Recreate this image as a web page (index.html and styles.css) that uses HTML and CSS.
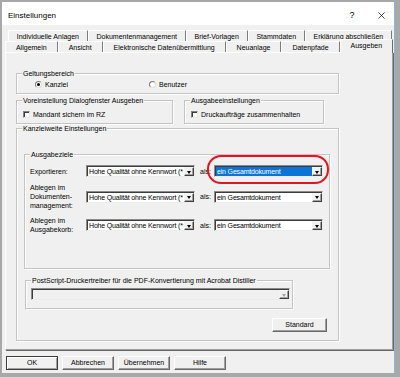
FILE: index.html
```html
<!DOCTYPE html>
<html>
  <head>
    <title>Einstellungen</title>
    <link rel="stylesheet" href="styles.css">
  </head>
  <body>
    <div class="window">
      <div class="titlebar">
        <span class="title">Einstellungen</span>
        <span class="help">?</span>
        <svg class="close" width="8" height="8" viewBox="0 0 8 8">
          <path d="M0.5 0.5 L7.5 7.5 M7.5 0.5 L0.5 7.5" stroke="#000" stroke-width="0.8" fill="none"/>
        </svg>
      </div>
      <div class="content">
        <div class="tab-row back">
          <div class="tab">Individuelle Anlagen</div>
          <div class="tab">Dokumentenmanagement</div>
          <div class="tab">Brief-Vorlagen</div>
          <div class="tab">Stammdaten</div>
          <div class="tab">Erklärung abschließen</div>
        </div>
        <div class="tab-row front">
          <div class="tab">Allgemein</div>
          <div class="tab">Ansicht</div>
          <div class="tab">Elektronische Datenübermittlung</div>
          <div class="tab">Neuanlage</div>
          <div class="tab">Datenpfade</div>
          <div class="tab active">Ausgeben</div>
        </div>
        <div class="panel">
          <fieldset class="group scope">
            <legend>Geltungsbereich</legend>
            <div class="group-body">
              <label class="option"><span class="radio checked"></span>Kanzlei</label>
              <label class="option"><span class="radio"></span>Benutzer</label>
            </div>
          </fieldset>
          <div class="pair">
            <fieldset class="group dialog">
              <legend>Voreinstellung Dialogfenster Ausgeben</legend>
              <div class="group-body">
                <label class="option"><span class="check"></span>Mandant sichern im RZ</label>
              </div>
            </fieldset>
            <fieldset class="group output">
              <legend>Ausgabeeinstellungen</legend>
              <div class="group-body">
                <label class="option"><span class="check"></span>Druckaufträge zusammenhalten</label>
              </div>
            </fieldset>
          </div>
          <fieldset class="group firm">
            <legend>Kanzleiweite Einstellungen</legend>
            <div class="group-body">
              <fieldset class="group targets">
                <legend>Ausgabeziele</legend>
                <div class="group-body target-grid">
                  <span class="field-label">Exportieren:</span>
                  <div class="combo"><span class="value">Hohe Qualität ohne Kennwort (*</span><span class="arrow"></span></div>
                  <span class="als">als:</span>
                  <div class="marked">
                    <div class="combo"><span class="value selected">ein Gesamtdokument</span><span class="arrow"></span></div>
                    <div class="mark"></div>
                  </div>

                  <span class="field-label">Ablegen im<br>Dokumenten-<br>management:</span>
                  <div class="combo"><span class="value">Hohe Qualität ohne Kennwort (*</span><span class="arrow"></span></div>
                  <span class="als">als:</span>
                  <div class="combo"><span class="value">ein Gesamtdokument</span><span class="arrow"></span></div>

                  <span class="field-label">Ablegen im<br>Ausgabekorb:</span>
                  <div class="combo"><span class="value">Hohe Qualität ohne Kennwort (*</span><span class="arrow"></span></div>
                  <span class="als">als:</span>
                  <div class="combo"><span class="value">ein Gesamtdokument</span><span class="arrow"></span></div>
                </div>
              </fieldset>
              <fieldset class="group driver">
                <legend>PostScript-Druckertreiber für die PDF-Konvertierung mit Acrobat Distiller</legend>
                <div class="group-body">
                  <div class="combo disabled"><span class="value"></span><span class="arrow"></span></div>
                </div>
              </fieldset>
              <div class="actions">
                <button class="btn wide">Standard</button>
              </div>
            </div>
          </fieldset>
        </div>
        <div class="footer">
          <button class="btn default">OK</button>
          <button class="btn">Abbrechen</button>
          <button class="btn">Übernehmen</button>
          <button class="btn">Hilfe</button>
        </div>
      </div>
    </div>
  </body>
</html>
```

FILE: styles.css
```css
* {
  margin: 0;
  padding: 0;
  box-sizing: border-box;
}

body {
  width: 400px;
  height: 377px;
  overflow: hidden;
  padding: 2px 0 0 2px;
  background: #a8a8a8;
  font-family: 'Liberation Sans', Arial, sans-serif;
  font-size: 7px;
  line-height: 9px;
  color: #000;
}

.window {
  width: 393px;
  height: 371px;
  background: #f0f0f0;
  border-right: 1px solid #8fb3da;
  display: flex;
  flex-direction: column;
}

.titlebar {
  height: 23px;
  background: #fff;
  display: flex;
  align-items: center;
  padding: 3px 9px 0 6px;
  font-size: 8px;
}

.title {
  flex: 1;
}

.help {
  width: 10px;
  text-align: center;
  font-size: 9px;
  margin-right: 21px;
}

.close {
  display: block;
  width: 7px;
  height: 7px;
}

.content {
  flex: 1;
  display: flex;
  flex-direction: column;
  padding: 5px 1px 0 3px;
}

/* tabs */
.tab-row {
  display: flex;
  height: 11px;
}

.tab-row.back {
  margin: 0 1px 0 3px;
}

.tab {
  flex: 1 1 auto;
  height: 11px;
  padding: 1px 3px 0;
  text-align: center;
  white-space: nowrap;
  border: 1px solid #fff;
  border-bottom: none;
  border-right-color: #7c7c7c;
}

.tab.active {
  position: relative;
  z-index: 1;
  height: 14px;
  margin-top: -2px;
  padding-top: 1px;
  background: #f0f0f0;
  border-right-color: #696969;
}

.panel {
  height: 298px;
  border-top: 1px solid #fff;
  border-left: 1px solid #fff;
  border-right: 1px solid #a0a0a0;
  border-bottom: 1px solid #a0a0a0;
  box-shadow: 1px 1px 0 #696969;
  padding: 16px 0 0 10px;
}

/* group boxes */
.group {
  border: 1px solid #c4c4c4;
  box-shadow: inset 1px 1px 0 #fff, 1px 1px 0 #fff;
  min-width: 0;
}

.group legend {
  margin-left: 5px;
  padding: 0 1px;
  line-height: 9px;
  background: #f0f0f0;
  white-space: nowrap;
}

.option {
  display: flex;
  align-items: center;
  gap: 3px;
  height: 9px;
}

.radio {
  width: 7px;
  height: 7px;
  border-radius: 50%;
  background: #fff;
  border: 1px solid;
  border-color: #7a7a7a #dcdcdc #dcdcdc #7a7a7a;
  display: flex;
  align-items: center;
  justify-content: center;
}

.radio.checked::after {
  content: '';
  width: 3px;
  height: 3px;
  border-radius: 50%;
  background: #000;
}

.check {
  width: 7px;
  height: 7px;
  background: #fff;
  border: 1px solid;
  border-color: #808080 #e6e6e6 #e6e6e6 #808080;
  box-shadow: inset 1px 1px 0 #404040;
}

.scope {
  width: 323px;
}

.scope .group-body {
  display: flex;
  padding: 2px 0 4px 18px;
}

.scope .option:first-child {
  width: 114px;
}

.pair {
  display: flex;
  margin-top: 2px;
}

.dialog {
  width: 157px;
}

.output {
  width: 140px;
  margin-left: 11px;
}

.dialog .group-body,
.output .group-body {
  padding: 5px 0 4px 6px;
}

.firm {
  width: 323px;
}

.firm > .group-body {
  padding: 17px 8px 8px 7px;
}

.targets {
  width: 306px;
}

.target-grid {
  display: grid;
  grid-template-columns: 56px 109px 19px 109px;
  row-gap: 6px;
  align-items: center;
  padding: 6px 6px 34px 5px;
}

.als {
  padding-left: 5px;
}

/* combo boxes */
.combo {
  height: 12px;
  display: flex;
  background: #fff;
  border: 1px solid;
  border-color: #8a8a8a #ececec #ececec #8a8a8a;
  box-shadow: inset 1px 1px 0 #3c3c3c;
  padding: 1px 0 0 1px;
}

.combo .value {
  flex: 1;
  overflow: hidden;
  white-space: nowrap;
  line-height: 9px;
  padding-left: 1px;
  letter-spacing: -0.17px;
}

.combo .value.selected {
  background: #0b74d8;
  color: #fff;
}

.combo .arrow {
  width: 10px;
  height: 9px;
  background: #f0f0f0;
  border: 1px solid;
  border-color: #f4f4f4 #404040 #404040 #f4f4f4;
  box-shadow: inset -1px -1px 0 #a0a0a0;
  display: flex;
  align-items: center;
  justify-content: center;
}

.combo .arrow::after {
  content: '';
  border-left: 2.5px solid transparent;
  border-right: 2.5px solid transparent;
  border-top: 3px solid #000;
  margin-top: 1px;
}

.combo.disabled {
  background: #f0f0f0;
}

.combo.disabled .arrow::after {
  border-top-color: #a0a0a0;
}

.marked {
  position: relative;
}

.mark {
  position: absolute;
  left: -7px;
  right: -6px;
  top: -10px;
  bottom: -7px;
  border: 2px solid #e3141c;
  border-radius: 14px;
}

.driver {
  width: 268px;
  margin: 7px 0 0 1px;
}

.driver .group-body {
  padding: 3px 2px 8px 5px;
}

.actions {
  display: flex;
  justify-content: flex-end;
  margin-top: 9px;
  padding-right: 3px;
}

/* buttons */
.btn {
  width: 52px;
  height: 14px;
  font: inherit;
  line-height: 12px;
  color: #000;
  background: #f0f0f0;
  border: 1px solid;
  border-color: #fff #696969 #696969 #fff;
  box-shadow: inset -1px -1px 0 #a0a0a0;
}

.btn.wide {
  width: 55px;
}

.btn.default {
  border-color: #3c3c3c;
  box-shadow: inset 1px 1px 0 #fff, inset -1px -1px 0 #a0a0a0;
}

.footer {
  display: flex;
  gap: 4px;
  margin-top: 6px;
  padding-left: 1px;
}
```
